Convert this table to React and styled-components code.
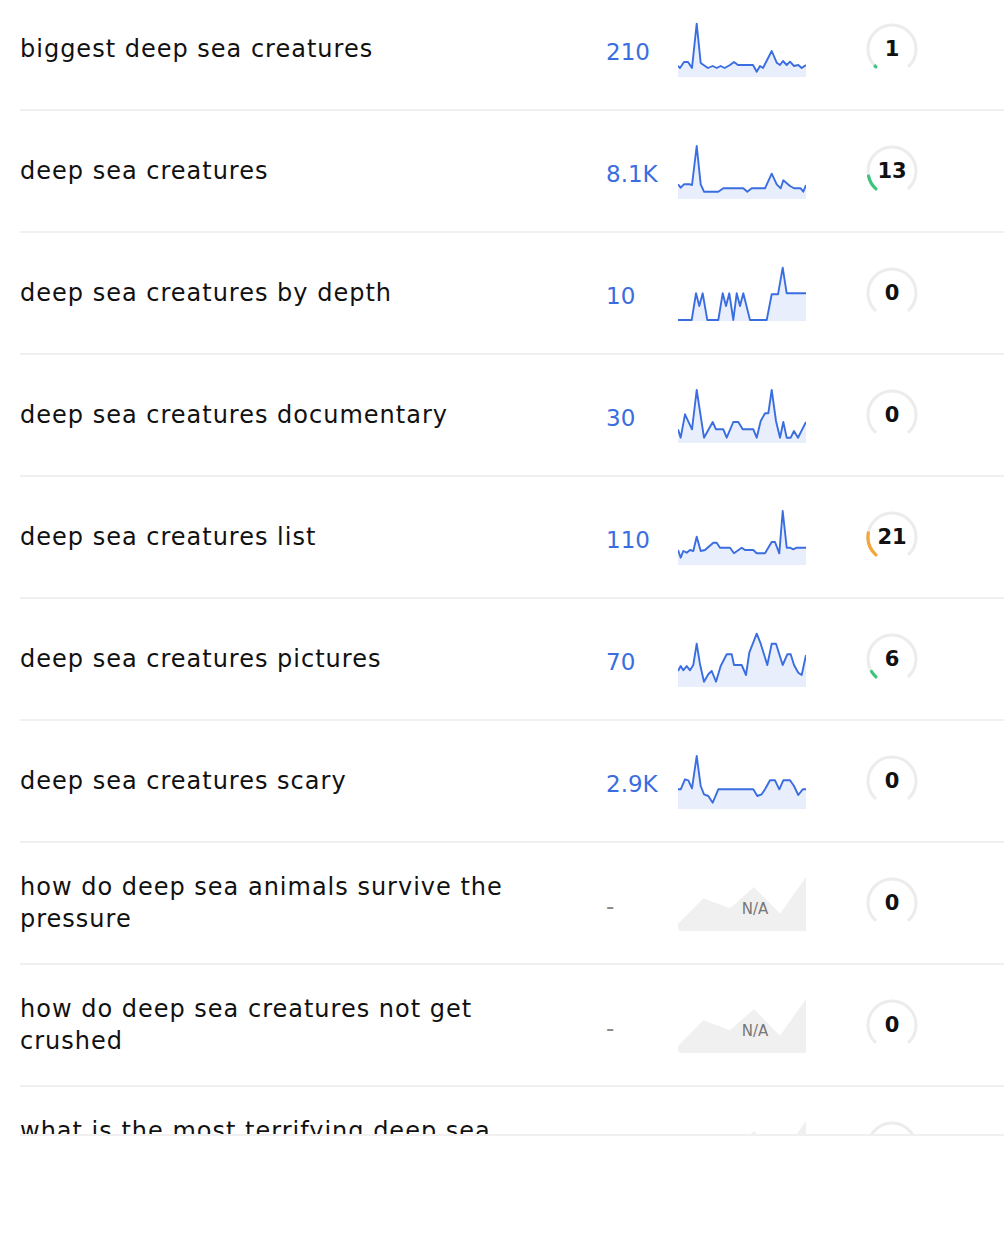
import React from "react";
import styled, { createGlobalStyle } from "styled-components";

const GlobalStyle = createGlobalStyle`
  body {
    margin: 0;
    background: #fff;
    font-family: "DejaVu Sans", "Noto Sans", sans-serif;
    color: #111;
  }
`;

const Viewport = styled.div`
  height: 1134px;
  overflow: hidden;
`;

const List = styled.div`
  margin-top: -11px;
`;

const BottomRule = styled.div`
  margin-left: 20px;
  height: 2px;
  background: #f0f0f0;
`;

const Row = styled.div`
  display: flex;
  align-items: center;
  min-height: 120px;
  margin-left: 20px;
  border-bottom: 2px solid #f0f0f0;
`;

const Keyword = styled.div`
  flex: 0 0 586px;
  font-size: 24px;
  line-height: 32px;
  letter-spacing: 1px;
  color: #111;

  span {
    display: block;
    max-width: 525px;
  }
`;

const Volume = styled.div`
  flex: 0 0 72px;
  padding-top: 6px;
  font-size: 23px;
  color: ${(p) => (p.$empty ? "#888" : "#3a6ee0")};
`;

const Chart = styled.div`
  position: relative;
  flex: 0 0 128px;
  height: 56px;
  svg {
    display: block;
  }
`;

const NA = styled.span`
  position: absolute;
  left: 0;
  right: 0;
  top: 25px;
  padding-left: 26px;
  text-align: center;
  font-size: 15px;
  color: #777;
`;

const Gauge = styled.div`
  position: relative;
  flex: 0 0 52px;
  height: 52px;
  margin-left: 60px;
  svg {
    display: block;
  }
`;

const GaugeValue = styled.span`
  position: absolute;
  inset: 0;
  display: flex;
  align-items: center;
  justify-content: center;
  font-size: 21px;
  font-weight: 700;
  color: #111;
`;

const rows = [
  {
    kw: "biggest deep sea creatures",
    vol: "210",
    kd: 1,
    pts: "0,45 2,47 6,41 10,41 14,47 18.7,2.7 22.7,42 27,45 30,47 34.7,45 38.7,47 42.7,45 46.7,47 52,44 56,41 60,44 75,44 78.7,50.7 82,45 85,47 93.7,30 98.7,41.7 102,44 105,40 108.7,44 112,40.7 116,45 120.3,44 123.7,47 128,44",
  },
  {
    kw: "deep sea creatures",
    vol: "8.1K",
    kd: 13,
    pts: "0,41.3 2.7,44.7 6,41.3 12,41.3 14,42 18.7,3 22.7,41.3 26,48.7 40.3,48.7 45.3,45.3 65.3,45.3 69.3,48.7 73.7,45.3 87,45.3 93.7,30.7 98.7,41.3 102.7,45.3 105.3,37.3 112,43 116,45.3 122.7,45.3 125.3,48.7 128,42",
  },
  {
    kw: "deep sea creatures by depth",
    vol: "10",
    kd: 0,
    pts: "0,55 13.7,55 18,28.3 21.3,41 24.7,28.3 29.3,55 40.3,55 44.7,28.3 48,41 51.3,28.3 55.3,55 58.7,28.3 62,41 65.3,28.3 72,55 88.7,55 93.7,29.3 100,29.3 104.7,2.7 108.7,28.3 128,28.3",
  },
  {
    kw: "deep sea creatures documentary",
    vol: "30",
    kd: 0,
    pts: "0,42.3 2.7,50.7 7,27.3 14,42.3 18.7,3 26,50.7 34.7,35 38,42.3 45.3,42.3 48.7,50.7 55.3,35 60.3,35 64.7,42.3 75.3,42.3 78.7,50.7 82.7,34 87,26.3 90.3,26.3 93.7,3 98,34 102,50.7 105.3,35 108.7,50.7 112.7,50.7 116,44 120,50.7 128,35",
  },
  {
    kw: "deep sea creatures list",
    vol: "110",
    kd: 21,
    pts: "0,41 2.7,48.7 5.3,42 8.7,43.7 12,41 15.3,42 18.7,27.7 22.7,42 27,41 35.3,33.7 38.7,33.7 42,38.7 52,38.7 56,44.3 63.7,38.7 67,41 75.3,41 78.7,44.3 87,44.3 93.7,33 97,33 101.3,44.3 104.7,2 108.7,38.7 112,38.7 115.3,40.3 118.7,38.7 128,38.7",
  },
  {
    kw: "deep sea creatures pictures",
    vol: "70",
    kd: 6,
    pts: "0,40 2.7,35 5.3,39.3 8.7,35 12,39.3 15.3,34 18.7,12.7 22,33.3 26,50.7 30.3,43.3 33.7,40 38,50.7 42.7,35 48.7,23.3 53.7,23.3 56,34 63.7,34 68,44 71.3,21.7 78.7,2.7 82.7,12.7 89.3,34 93.7,12.7 98,12.7 104.7,34 109.3,23.3 112.7,23.3 116,34 120.3,41.7 123.7,44 128,24",
  },
  {
    kw: "deep sea creatures scary",
    vol: "2.9K",
    kd: 0,
    pts: "0,36.3 2.7,36.3 7,26.3 10.3,27.3 14,35.3 18.7,3 22.7,33 26,41.3 30.3,43 34.7,49.7 40.3,36.3 75.3,36.3 79.3,43 83.7,41.3 87,36.3 92,27.3 97,27.3 101.3,36.3 105.3,27.3 112,27.3 116,33 120.3,42 124.7,36.3 128,36.3",
  },
  { kw: "how do deep sea animals survive the pressure", vol: null, kd: 0 },
  { kw: "how do deep sea creatures not get crushed", vol: null, kd: 0 },
  { kw: "what is the most terrifying deep sea creature", vol: null, kd: 0 },
];

function Sparkline({ pts }) {
  if (!pts) {
    return (
      <Chart>
        <svg width="128" height="56" viewBox="0 0 128 56">
          <path
            d="M0 49 L25.3 23.3 L52 33.3 L76 12 L102 38.7 L128 2 L128 56 L4 56 Q0 56 0 52 Z"
            fill="#f0f0f0"
          />
        </svg>
        <NA>N/A</NA>
      </Chart>
    );
  }
  return (
    <Chart>
      <svg width="128" height="56" viewBox="0 0 128 56">
        <polygon points={`0,56 ${pts} 128,56`} fill="#e8eefc" />
        <polyline
          points={pts}
          fill="none"
          stroke="#3a6ee0"
          strokeWidth="1.9"
          strokeLinejoin="round"
        />
      </svg>
    </Chart>
  );
}

const R = 24;
const C = 26;
const START = 222;
const SWEEP = 276;

function pt(deg) {
  const a = ((deg - 90) * Math.PI) / 180;
  return [C + R * Math.cos(a), C + R * Math.sin(a)];
}

function arc(from, len) {
  const [x1, y1] = pt(from);
  const [x2, y2] = pt(from + len);
  const large = len > 180 ? 1 : 0;
  return `M${x1.toFixed(2)} ${y1.toFixed(2)} A${R} ${R} 0 ${large} 1 ${x2.toFixed(2)} ${y2.toFixed(2)}`;
}

function KdGauge({ value }) {
  const color = value < 15 ? "#3cc47c" : "#f2a63a";
  const len = Math.max((value / 100) * SWEEP, 0.5);
  return (
    <Gauge>
      <svg width="52" height="52" viewBox="0 0 52 52">
        <path d={arc(START, SWEEP)} fill="none" stroke="#ececec" strokeWidth="3" />
        {value > 0 && (
          <path
            d={arc(START, len)}
            fill="none"
            stroke={color}
            strokeWidth="3.2"
            strokeLinecap="round"
          />
        )}
      </svg>
      <GaugeValue>{value}</GaugeValue>
    </Gauge>
  );
}

export default function App() {
  return (
    <>
      <GlobalStyle />
      <Viewport>
        <List>
          {rows.map((r) => (
            <Row key={r.kw}>
              <Keyword>
                <span>{r.kw}</span>
              </Keyword>
              <Volume $empty={!r.vol}>{r.vol || "-"}</Volume>
              <Sparkline pts={r.pts} />
              <KdGauge value={r.kd} />
            </Row>
          ))}
        </List>
      </Viewport>
      <BottomRule />
    </>
  );
}
